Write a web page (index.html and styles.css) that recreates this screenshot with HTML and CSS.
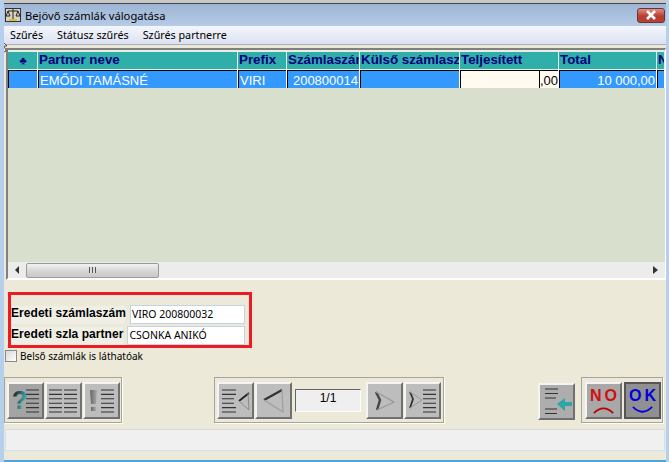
FILE: index.html
```html
<!DOCTYPE html>
<html lang="hu">
<head>
    <meta charset="UTF-8">
    <meta name="viewport" content="width=device-width, initial-scale=1.0">
    <title>Bejövő számlák válogatása</title>
    <link rel="stylesheet" href="styles.css">
</head>
<body>
    <div class="window">
        <div class="top-strip"></div>
        <div class="titlebar">
            <svg class="app-icon" width="16" height="16" viewBox="0 0 16 16">
                <rect x="0.5" y="1.500" width="15" height="13" fill="#d8d4c4" stroke="#333"/>
                <path d="M8 2v11M3 4h10M3 4l-2 5h4zM13 4l-2 5h4z" fill="none" stroke="#222"/>
                <rect x="4" y="12" width="8" height="2" fill="#d8c030"/>
            </svg>
            <span class="title-text">Bejövő számlák válogatása</span>
            <div class="close-btn">
                <svg width="12" height="10" viewBox="0 0 12 10"><path d="M2 1l8 8M10 1l-8 8" stroke="#fff" stroke-width="2.600"/></svg>
            </div>
        </div>
        <div class="menu">
            <span>Szűrés</span>
            <span>Státusz szűrés</span>
            <span>Szűrés partnerre</span>
        </div>

        <div class="grid">
            <div class="grid-head">
                <div class="hcell club">♣</div>
                <div class="hcell">Partner neve</div>
                <div class="hcell">Prefix</div>
                <div class="hcell">Számlaszám</div>
                <div class="hcell">Külső számlaszám</div>
                <div class="hcell">Teljesített</div>
                <div class="hcell">Total</div>
                <div class="hcell">N</div>
            </div>
            <div class="grid-row">
                <div class="cell"></div>
                <div class="cell">EMŐDI TAMÁSNÉ</div>
                <div class="cell">VIRI</div>
                <div class="cell num">200800014</div>
                <div class="cell"></div>
                <div class="cell edit"><span class="caret">,00</span></div>
                <div class="cell num">10 000,00</div>
                <div class="cell"></div>
            </div>
            <div class="grid-body"></div>
            <div class="hscroll">
                <svg width="5" height="8" viewBox="0 0 5 8"><path d="M4 0v8L0 4z" fill="#333"/></svg>
                <div class="thumb"><span class="grip"></span></div>
                <svg class="arrow-right" width="5" height="8" viewBox="0 0 5 8"><path d="M0 0v8l5-4z" fill="#333"/></svg>
            </div>
        </div>

        <div class="orig-box">
            <div class="orig-row">
                <label class="orig-label">Eredeti számlaszám</label>
                <div class="orig-input">VIRO 200800032</div>
            </div>
            <div class="orig-row">
                <label class="orig-label">Eredeti szla partner</label>
                <div class="orig-input">CSONKA ANIKÓ</div>
            </div>
        </div>
        <div class="check-row">
            <span class="check"></span>
            <span>Belső számlák is láthatóak</span>
        </div>

        <div class="toolbar">
            <div class="group group-left">
                <div class="tbtn pressed">
                    <svg viewBox="0 0 33 33">
                        <defs>
                            <linearGradient id="qfill" x1="0" y1="0" x2="1" y2="0.6">
                                <stop offset="0.2" stop-color="#222"/>
                                <stop offset="0.8" stop-color="#2fa5a5"/>
                            </linearGradient>
                        </defs>
                        <text x="3" y="25" class="ico-q" fill="url(#qfill)">?</text>
                        <path class="lines" d="M17 6h13M17 10.400h13M17 14.800h13M17 19.200h13M17 23.600h13M17 28h13"/>
                    </svg>
                </div>
                <div class="tbtn">
                    <svg viewBox="0 0 33 33">
                        <path class="lines" d="M2 6h13M17 6h13M2 10.400h13M17 10.400h13M2 14.800h13M17 14.800h13M2 19.200h13M17 19.200h13M2 23.600h13M17 23.600h13M2 28h13M17 28h13"/>
                    </svg>
                </div>
                <div class="tbtn">
                    <svg viewBox="0 0 33 33">
                        <defs>
                            <linearGradient id="bang" x1="0" y1="0" x2="1" y2="0">
                                <stop offset="0" stop-color="#666"/>
                                <stop offset="1" stop-color="#aaa"/>
                            </linearGradient>
                        </defs>
                        <path d="M5 6h7l-1 14H6z" fill="url(#bang)"/>
                        <rect x="6" y="23" width="5" height="4" fill="url(#bang)"/>
                        <path class="lines" d="M16 6h13M16 10.400h13M16 14.800h13M16 19.200h13M16 23.600h13M16 28h13"/>
                    </svg>
                </div>
            </div>

            <div class="group group-nav">
                <div class="tbtn">
                    <svg viewBox="0 0 33 33">
                        <path class="lines" d="M3 6h14M3 10.400h14M3 14.800h12M3 19.200h12M3 23.600h14M3 28h14"/>
                        <path d="M30 9l-10 8" stroke="#222" stroke-width="1.800" fill="none"/>
                        <path d="M20 17l10 9-1-17" stroke="#8a8a8a" fill="none"/>
                    </svg>
                </div>
                <div class="tbtn">
                    <svg viewBox="0 0 33 33">
                        <path d="M25 6L7 16" stroke="#333" stroke-width="2.200" fill="none"/>
                        <path d="M7 16l19 12-1-22" stroke="#a0a0a0" stroke-width="1.300" fill="none"/>
                    </svg>
                </div>
                <div class="page-box">1/1</div>
                <div class="tbtn">
                    <svg viewBox="0 0 33 33">
                        <path d="M8 8l4 8-3 10" stroke="#444" stroke-width="2.400" fill="none"/>
                        <path d="M8 8l18 10-17 8" stroke="#999" stroke-width="1.300" fill="none"/>
                    </svg>
                </div>
                <div class="tbtn">
                    <svg viewBox="0 0 33 33">
                        <path d="M4 8l3 7-3 9" stroke="#333" stroke-width="1.800" fill="none"/>
                        <path d="M4 8l12 8-12 8" stroke="#999" fill="none"/>
                        <path class="lines" d="M17 6h13M17 10.400h13M17 14.800h13M17 19.200h13M17 23.600h13M17 28h13"/>
                    </svg>
                </div>
            </div>

            <div class="tbtn single">
                <svg viewBox="0 0 33 33">
                    <path class="lines" d="M5 4h13M5 8.500h13M5 13h11M5 24h12M5 28.500h12"/>
                    <path d="M17 19l8-6v4h7v4h-7v5z" fill="#2fa5a5"/>
                </svg>
            </div>

            <div class="group group-ok">
                <div class="tbtn dark">
                    <span class="word no">NO</span>
                    <svg class="mouth" viewBox="0 0 24 9"><path d="M1 8Q12 -3 23 8" stroke="#b00" stroke-width="2" fill="none"/></svg>
                </div>
                <div class="tbtn dark focused">
                    <span class="word ok">OK</span>
                    <svg class="mouth" viewBox="0 0 24 9"><path d="M1 1Q12 12 23 1" stroke="#0000e0" stroke-width="2" fill="none"/></svg>
                </div>
            </div>
        </div>

        <div class="statusbar"></div>
        <div class="bottom-strip"></div>

        <svg class="cursor" width="8" height="14" viewBox="0 0 8 14"><path d="M0 0l7 7-3 0 2 5-2 1-2-5-2 2z" fill="#fff" stroke="#333" stroke-width="0.800"/></svg>
    </div>
</body>
</html>
```

FILE: styles.css
```css
html, body {
    margin: 0;
    padding: 0;
}
body {
    width: 669px;
    height: 462px;
    overflow: hidden;
    font-family: "Noto Sans", "Open Sans", sans-serif;
    color: #000;
}
.window {
    position: relative;
    box-sizing: border-box;
    width: 669px;
    height: 462px;
    display: flex;
    flex-direction: column;
    background: #ece9d8;
    border-left: 4px solid #b5cfec;
    border-right: 3px solid #b5cfec;
    overflow: hidden;
}
.top-strip {
    height: 3px;
    margin: 0 -3px 0 -4px;
    background: #c8c8c8;
    border-bottom: 1px solid #444;
}
.titlebar {
    height: 22px;
    display: flex;
    align-items: center;
    margin: 0 -3px 0 -4px;
    padding-left: 5px;
    background: linear-gradient(to bottom, #9db5d4, #b5cbe6);
}
.app-icon {
    margin-right: 4px;
}
.title-text {
    font-size: 11.200px;
    padding-top: 1px;
}
.close-btn {
    margin-left: auto;
    margin-right: 4px;
    width: 28px;
    height: 15px;
    box-sizing: border-box;
    display: flex;
    align-items: center;
    justify-content: center;
    background: linear-gradient(to bottom, #dd9088, #bb3c30 55%, #b04438);
    border: 1px solid #6c3430;
    border-radius: 3px;
}
.menu {
    box-sizing: border-box;
    height: 19px;
    display: flex;
    align-items: center;
    gap: 14px;
    margin: 0 -3px 0 -4px;
    padding: 0 0 0 10px;
    background: linear-gradient(to bottom, #f4f6fb, #dbe2f1);
    border-bottom: 1px solid #a8aec0;
}
.menu span {
    font-size: 10.750px;
}

/* grid */
.grid {
    box-sizing: border-box;
    margin: 3px 0 0 2px;
    width: 660px;
    height: 232px;
    display: flex;
    flex-direction: column;
    background: #d8dfcc;
    border-top: 2px solid #808080;
    border-left: 2px solid #808080;
    border-right: 1px solid #fff;
    border-bottom: 2px solid #fff;
    font-family: "Liberation Sans", Arial, sans-serif;
    font-size: 13px;
    overflow: hidden;
}
.grid-head, .grid-row {
    display: grid;
    grid-template-columns: 30px 200px 49px 73px 100px 99px 98px 8px;
}
.grid-head {
    height: 20px;
    padding: 2px 0 1px;
    box-sizing: border-box;
    background: #e8efe0;
}
.hcell {
    background: #30aeaa;
    color: #000080;
    font-size: 13.330px;
    font-weight: bold;
    line-height: 16px;
    padding-left: 1px;
    margin-right: 1px;
    white-space: nowrap;
    overflow: hidden;
}
.club {
    text-align: center;
    font-size: 11px;
}
.grid-row {
    height: 18px;
    background: #fff;
}
.cell {
    box-sizing: border-box;
    background: #3399ff;
    color: #fff;
    border-left: 1px solid #000;
    border-top: 1px solid #000;
    margin-right: 1px;
    line-height: 19px;
    padding-left: 1px;
    white-space: nowrap;
    overflow: hidden;
}
.num {
    text-align: right;
    padding-right: 1px;
}
.edit {
    background: #fffbf0;
    color: #000;
    text-align: right;
}
.caret {
    border-left: 1px solid #000;
    display: inline-block;
}
.grid-body {
    flex: 1;
}
.hscroll {
    height: 16px;
    display: flex;
    align-items: center;
    padding: 0 7px;
    background: #ececec;
}
.thumb {
    margin-left: 6px;
    width: 133px;
    height: 15px;
    box-sizing: border-box;
    display: flex;
    align-items: center;
    justify-content: center;
    background: linear-gradient(to bottom, #f2f2f2, #d6d6d6 55%, #c8c8c8);
    border: 1px solid #9a9a9a;
    border-radius: 2px;
}
.grip {
    width: 7px;
    height: 6px;
    background: repeating-linear-gradient(to right, #555 0 1px, #ddd 1px 3px);
}
.arrow-right {
    margin-left: auto;
}

/* original invoice box */
.orig-box {
    box-sizing: border-box;
    margin: 12px 0 0 4px;
    width: 244px;
    height: 56px;
    padding: 10px 4px 0 0;
    display: flex;
    flex-direction: column;
    gap: 2px;
    border: 3px solid #ed1c24;
}
.orig-row {
    display: flex;
    align-items: center;
    justify-content: flex-end;
    gap: 4px;
}
.orig-label {
    font-family: "Liberation Sans", Arial, sans-serif;
    font-size: 12px;
    font-weight: bold;
    letter-spacing: 0.050px;
    white-space: nowrap;
    background: #f0efe6;
    line-height: 15px;
    padding-bottom: 3px;
}
.orig-input {
    box-sizing: border-box;
    width: 118px;
    height: 19px;
    background: #fff;
    border: 1px solid #c4d4e4;
    font-size: 10.500px;
    line-height: 17px;
    padding-left: 1px;
}
.check-row {
    display: flex;
    align-items: center;
    gap: 3px;
    height: 15px;
    margin: 0 0 0 1px;
    font-size: 10px;
}
.check {
    box-sizing: border-box;
    width: 12px;
    height: 12px;
    background: linear-gradient(135deg, #d8d8d8, #fff);
    border: 1px solid #8a8a8a;
}

/* buttons */
.toolbar {
    display: flex;
    align-items: flex-start;
    height: 46px;
    margin-top: 14px;
}
.group {
    box-sizing: border-box;
    height: 46px;
    display: flex;
    align-items: center;
    gap: 1px;
    padding: 0 2px;
    border: 1px solid #a6a698;
    box-shadow: 1px 1px 0 #fff;
}
.group-left {
    width: 118px;
}
.group-nav {
    width: 230px;
    margin-left: 92px;
}
.group-ok {
    width: 82px;
    margin-left: 6px;
    gap: 2px;
    padding-left: 3px;
}
.tbtn {
    box-sizing: border-box;
    flex: none;
    width: 37px;
    height: 37px;
    display: flex;
    align-items: center;
    justify-content: center;
    background: #bdbdbd;
    border: 2px solid;
    border-color: #f4f4f4 #707070 #707070 #f4f4f4;
}
.tbtn svg {
    width: 33px;
    height: 33px;
}
.pressed {
    background: #a4a4a4;
}
.dark {
    background: #a8a8a8;
    flex-direction: column;
    justify-content: flex-start;
}
.focused {
    border-color: #555;
    background: #909090;
}
.single {
    margin: 6px 0 0 94px;
    background: #adadad;
}
.lines {
    fill: none;
    stroke: #333;
    stroke-width: 1.100;
}
.ico-q {
    font-family: "Liberation Sans", Arial, sans-serif;
    font-size: 25px;
    font-weight: bold;
}
.page-box {
    box-sizing: border-box;
    flex: none;
    width: 66px;
    height: 23px;
    margin: 0 4px 0 2px;
    background: #efefef;
    border: 1px solid;
    border-color: #666 #fff #fff #666;
    text-align: center;
    font-family: "Liberation Sans", Arial, sans-serif;
    font-size: 12px;
    line-height: 17px;
}
.word {
    font-family: "Liberation Sans", Arial, sans-serif;
    font-size: 16px;
    font-weight: bold;
    letter-spacing: 3px;
    margin-right: -3px;
    line-height: 16px;
    margin-top: 4px;
}
.no {
    color: #d01010;
}
.ok {
    color: #0000e0;
}
.tbtn .mouth {
    width: 21px;
    height: 8px;
    margin-top: 2px;
}
.statusbar {
    box-sizing: border-box;
    flex: none;
    width: 660px;
    height: 22px;
    margin: 6px 0 0 1px;
    background: #f0f0f0;
    border: 1px solid #cfe0ee;
    border-top-color: #d8d8d8;
}
.bottom-strip {
    flex: none;
    height: 2px;
    margin: 9px -3px 0 -4px;
    background: #4da6d8;
}
.cursor {
    position: absolute;
    left: -4px;
    top: 39px;
}
```
